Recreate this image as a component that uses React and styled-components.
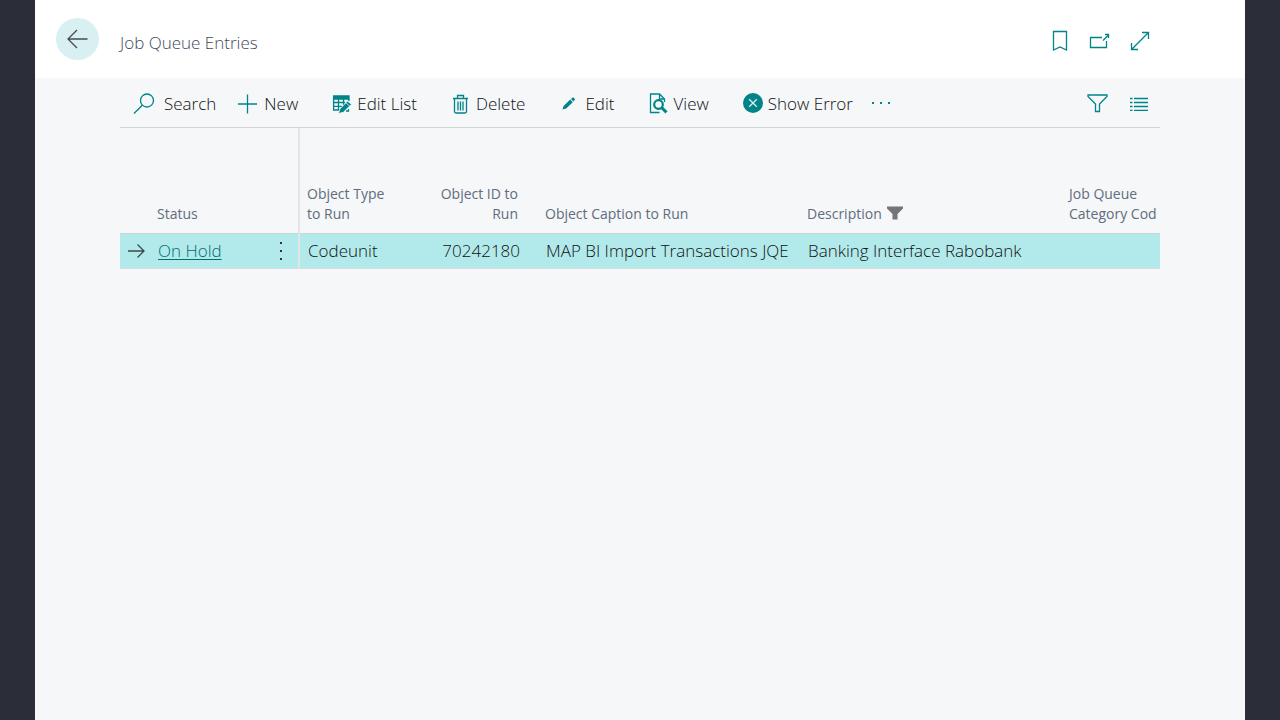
import styled, { createGlobalStyle } from "styled-components";

const GlobalStyle = createGlobalStyle`
    * {
        box-sizing: border-box;
    }
    body {
        margin: 0;
        background-color: #2b2e38;
        font-family: "Open Sans", "Noto Sans", sans-serif;
        font-weight: 300;
        color: #111;
    }
`;

const SearchIcon = () => (
    <Icon width="22" height="22" viewBox="0 0 22 22">
        <circle cx="14" cy="7.500" r="6.500" />
        <path d="M9.300 12.200L1 20.500" />
    </Icon>
);

const PlusIcon = () => (
    <Icon width="20" height="20" viewBox="0 0 20 20">
        <path d="M9.500 .5V19.500M0 10H19" />
    </Icon>
);

const EditListIcon = () => (
    <Icon width="20" height="20" viewBox="0 0 20 20">
        <path d="M1.600 2H17V5H1.600Z" fill="#008489" />
        <path d="M1.600 5V16H8M1.600 8.500H13M1.600 12.300H10M6.500 5V16M11.500 5V11M16.900 5V7" />
        <path d="M6.500 19.500L7.800 15L15.500 7L19.500 10.300L11.300 18.300Z" fill="#008489" stroke="#f5f7f9" strokeWidth="0.8" />
        <path d="M14 8.800L17.600 12" stroke="#f5f7f9" strokeWidth="0.8" />
        <path d="M14 17H16.500V15" />
    </Icon>
);

const DeleteIcon = () => (
    <Icon width="18" height="20" viewBox="0 0 18 20">
        <path d="M1 4.500H16M5.500 4V1.500H11.500V4M2.500 5V17.500Q2.500 19 4 19H13Q14.500 19 14.500 17.500V5M6 7.500V16.500M8.500 7.500V16.500M11 7.500V16.500" />
    </Icon>
);

const EditIcon = () => (
    <Icon width="14" height="14" viewBox="0 0 14 14">
        <path d="M.5 12.500L1.600 9L8.200 2.600L10.800 5.200L4.200 11.500ZM9 1.900L10.300 .7Q11 .1 11.700 .7L12.700 1.700Q13.300 2.400 12.700 3.100L11.500 4.400Z" fill="#008489" stroke="none" />
    </Icon>
);

const ViewIcon = () => (
    <Icon width="19" height="21" viewBox="0 0 19 21">
        <path d="M10.500 19.500H1.500V1H10.500L15.500 6V9M10.500 1V6H15.500" />
        <circle cx="9.500" cy="11.500" r="4.300" strokeWidth="2.200" />
        <path d="M12.500 14.500L17.500 19.300" strokeWidth="3" />
    </Icon>
);

const ErrorIcon = () => (
    <Icon width="20" height="22" viewBox="0 0 20 22">
        <circle cx="10" cy="10" r="10" fill="#008489" stroke="none" />
        <path d="M6.200 6.200L13.800 13.800M13.800 6.200L6.200 13.800" stroke="#d9f1f2" />
    </Icon>
);

const MoreIcon = () => (
    <Icon width="20" height="4" viewBox="0 0 20 4">
        <path d="M1 0H3V2H1ZM9 0H11V2H9ZM17 0H19V2H17Z" fill="#008489" stroke="none" />
    </Icon>
);

const BookmarkIcon = () => (
    <Icon width="16" height="22" viewBox="0 0 16 22">
        <path d="M1.500 1.500H14.500V20L8 17L1.500 20Z" />
    </Icon>
);

const PopOutIcon = () => (
    <Icon width="22" height="18" viewBox="0 0 22 18">
        <path d="M14 5.500H2.500V15.500H18.500V9M15 8.500L20.500 3M17 2.500H20.500V6" />
    </Icon>
);

const ExpandIcon = () => (
    <Icon width="20" height="20" viewBox="0 0 20 20">
        <path d="M1.500 18.500L18.500 1.500M12 1.500H18.500V8M1.500 12V18.500H8" />
    </Icon>
);

const FilterIcon = () => (
    <Icon width="22" height="20" viewBox="0 0 22 20">
        <path d="M1 1H20V2.500L12.500 10V17.500H8.500V10L1 2.500Z" />
    </Icon>
);

const ListIcon = () => (
    <Icon width="20" height="14" viewBox="0 0 20 14">
        <path d="M1 1.500H3.500M5 1.500H19M1 5.500H3.500M5 5.500H19M1 9.500H3.500M5 9.500H19M1 13.500H3.500M5 13.500H19" />
    </Icon>
);

const actions = [
    { label: "Search", icon: <SearchIcon />, gap: 9, after: 22 },
    { label: "New", icon: <PlusIcon />, gap: 6, after: 34 },
    { label: "Edit List", icon: <EditListIcon />, gap: 5, after: 35 },
    { label: "Delete", icon: <DeleteIcon />, gap: 6, after: 37 },
    { label: "Edit", icon: <EditIcon />, gap: 9, after: 35 },
    { label: "View", icon: <ViewIcon />, gap: 5, after: 34 },
    { label: "Show Error", icon: <ErrorIcon />, gap: 5, after: 18 },
];

const App = () => {
    return (
        <>
            <GlobalStyle />
            <Page>
                <Header>
                    <BackButton aria-label="Back">
                        <Icon width="22" height="20" viewBox="0 0 22 20" $color="#444b4f">
                            <path d="M20.500 10H1M10 1L1 10L10 19" />
                        </Icon>
                    </BackButton>
                    <Title>Job Queue Entries</Title>
                    <HeaderTools>
                        <IconButton aria-label="Bookmark"><BookmarkIcon /></IconButton>
                        <IconButton aria-label="Open in new window"><PopOutIcon /></IconButton>
                        <IconButton aria-label="Expand"><ExpandIcon /></IconButton>
                    </HeaderTools>
                </Header>
                <Content>
                    <Toolbar>
                        {actions.map((action) => (
                            <Action key={action.label} $gap={action.gap} $after={action.after}>
                                {action.icon}
                                {action.label}
                            </Action>
                        ))}
                        <IconButton aria-label="More options"><MoreIcon /></IconButton>
                        <ViewTools>
                            <IconButton aria-label="Filter"><FilterIcon /></IconButton>
                            <IconButton aria-label="Show as list"><ListIcon /></IconButton>
                        </ViewTools>
                    </Toolbar>
                    <Table>
                        <colgroup>
                            <Col $width={30} />
                            <Col $width={112} />
                            <Col $width={38} />
                            <Col $width={100} />
                            <Col $width={138} />
                            <Col $width={262} />
                            <Col $width={262} />
                            <col />
                        </colgroup>
                        <thead>
                            <tr>
                                <HeadCell />
                                <HeadCell>Status</HeadCell>
                                <HeadCell $divider />
                                <HeadCell>Object Type<br />to Run</HeadCell>
                                <HeadCell $right>Object ID to<br />Run</HeadCell>
                                <HeadCell>Object Caption to Run</HeadCell>
                                <HeadCell>
                                    Description
                                    <Funnel width="16" height="14" viewBox="0 0 16 14">
                                        <path d="M0 .5H16V2.500L10.500 8V13.500H5.500V8L0 2.500Z" fill="#757575" />
                                    </Funnel>
                                </HeadCell>
                                <HeadCell>Job Queue<br />Category Cod</HeadCell>
                            </tr>
                        </thead>
                        <tbody>
                            <Row>
                                <Cell>
                                    <Icon width="18" height="16" viewBox="0 0 18 16" $color="#3b4a4c">
                                        <path d="M0 8H16M9.500 1.500L16 8L9.500 14.500" />
                                    </Icon>
                                </Cell>
                                <Cell><StatusLink href="#">On Hold</StatusLink></Cell>
                                <Cell $divider>
                                    <IconButton aria-label="Row options">
                                        <Icon width="20" height="18" viewBox="0 0 20 18">
                                            <path d="M10 0H12V2H10ZM10 8H12V10H10ZM10 16H12V18H10Z" fill="#333" stroke="none" />
                                        </Icon>
                                    </IconButton>
                                </Cell>
                                <Cell>Codeunit</Cell>
                                <Cell $right>70242180</Cell>
                                <Cell>MAP BI Import Transactions JQE</Cell>
                                <Cell>Banking Interface Rabobank</Cell>
                                <Cell />
                            </Row>
                        </tbody>
                    </Table>
                </Content>
            </Page>
        </>
    );
};

const Page = styled.div`
    display: flex;
    flex-direction: column;
    min-height: 100vh;
    margin: 0 35px;
    background-color: #f5f7f9;
`;

const Header = styled.header`
    display: flex;
    align-items: center;
    height: 78px;
    padding: 0 95px 0 21px;
    background-color: #fff;
`;

const Icon = styled.svg`
    display: block;
    flex-shrink: 0;
    fill: none;
    stroke: ${({ $color }) => $color || "#008489"};
    stroke-width: 1.3;
`;

const BackButton = styled.button`
    display: flex;
    align-items: center;
    justify-content: center;
    width: 43px;
    height: 42px;
    padding: 0;
    border: none;
    border-radius: 50%;
    background-color: #d9f0f2;
`;

const Title = styled.h1`
    margin: 0 0 0 21px;
    padding-top: 8px;
    font-size: 17px;
    font-weight: 300;
    line-height: 24px;
    color: #3f4b5e;
`;

const HeaderTools = styled.div`
    display: flex;
    align-items: center;
    gap: 20px;
    margin-left: auto;
    padding-top: 4px;
`;

const IconButton = styled.button`
    display: block;
    padding: 0;
    border: none;
    background: none;
`;

const Content = styled.main`
    padding: 0 85px;
`;

const Toolbar = styled.div`
    display: flex;
    align-items: center;
    height: 50px;
    padding: 2px 11px 0 13px;
    border-bottom: 1px solid #d2d5d8;
`;

const Action = styled.button`
    display: flex;
    align-items: center;
    gap: ${({ $gap }) => $gap}px;
    margin-right: ${({ $after }) => $after}px;
    padding: 0;
    border: none;
    background: none;
    font: inherit;
    font-size: 17px;
    line-height: 24px;
    color: #111;
    white-space: nowrap;
`;

const ViewTools = styled.div`
    display: flex;
    align-items: center;
    gap: 20px;
    margin-left: auto;
`;

const Table = styled.table`
    width: 100%;
    table-layout: fixed;
    border-collapse: separate;
    border-spacing: 0;
`;

const Col = styled.col`
    width: ${({ $width }) => $width}px;
`;

const HeadCell = styled.th`
    height: 105px;
    padding: 0 ${({ $right }) => ($right ? 20 : 0)}px 9px 7px;
    border-right: ${({ $divider }) => ($divider ? "2px solid #e2e4e6" : "none")};
    font-size: 14px;
    font-weight: 400;
    line-height: 20px;
    text-align: ${({ $right }) => ($right ? "right" : "left")};
    vertical-align: bottom;
    color: #616c7c;
    white-space: nowrap;
`;

const Funnel = styled.svg`
    display: inline-block;
    margin-left: 5px;
    vertical-align: -1px;
`;

const Row = styled.tr`
    background-color: #b2eaec;
`;

const Cell = styled.td`
    height: 36px;
    padding: 0 ${({ $right }) => ($right ? 18 : 0)}px 0 8px;
    border-top: 1px solid #ccd3d6;
    border-bottom: 1px solid #dadcde;
    border-right: ${({ $divider }) => ($divider ? "2px solid #e2e4e6" : "none")};
    font-size: 17px;
    line-height: 24px;
    text-align: ${({ $right }) => ($right ? "right" : "left")};
    white-space: nowrap;
`;

const StatusLink = styled.a`
    color: #006d71;
    text-decoration: underline;
    text-underline-offset: 2px;
`;

export default App;
